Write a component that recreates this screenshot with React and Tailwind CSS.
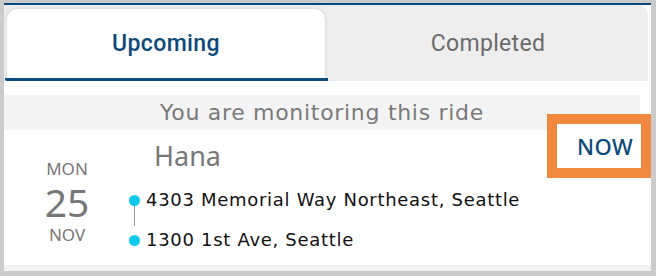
import React from "react";

const font = { fontFamily: "'Noto Sans', 'Liberation Sans', sans-serif" };
const wide = { fontFamily: "'DejaVu Sans', 'Noto Sans', sans-serif" };

const Stop = ({ text }) => (
  <div className="relative flex items-center h-[20px]">
    <span className="w-[11px] h-[11px] rounded-full bg-[#0ccaf0] shrink-0 ml-[-1px]" />
    <span className="ml-[6px] text-[18px] tracking-[0.7px] text-[#111] leading-none" style={wide}>{text}</span>
  </div>
);

const App = () => {
  return (
    <div className="w-[656px] h-[276px] bg-[#cbcbcb] pl-[4px] pt-[3px] pr-[5px] pb-[5px] font-['Roboto',sans-serif]">
      <div className="h-full flex flex-col bg-white border-t-2 border-[#0b4a7a]">
        {/* tabs */}
        <div className="flex h-[76px] shrink-0">
          <div className="w-[324px] bg-[#ececec] flex flex-col pl-[1px]">
            <div className="flex-1 mt-[4px] ml-[2px] mr-[3px] bg-white rounded-t-[10px] shadow-[0_0_3px_rgba(0,0,0,0.15)] flex items-center justify-center">
              <span className="text-[23px] tracking-[0.4px] font-medium text-[#0b4a7a] mt-[2px]">Upcoming</span>
            </div>
            <div className="h-[3px] bg-[#0b4a7a] rounded-bl-[2px]" />
          </div>
          <div className="flex-1 mr-[3px] bg-[#eeeeee] rounded-tr-[10px] flex items-center justify-center">
            <span className="text-[23px] tracking-[0.3px] text-[#6b6b6b] mt-[2px]">Completed</span>
          </div>
        </div>

        <div className="h-[14px] shrink-0" />

        {/* banner */}
        <div className="h-[35px] shrink-0 mr-[11px] bg-[#f4f4f4] flex items-center justify-center">
          <span className="text-[22px] tracking-[0.7px] text-[#7a7a7a] leading-none" style={wide}>You are monitoring this ride</span>
        </div>

        {/* card */}
        <div className="relative flex-1 flex" style={font}>
          <div className="w-[126px] shrink-0 flex flex-col items-center pt-[32px] text-[#777]">
            <span className="text-[17px] leading-[14px]">MON</span>
            <span className="text-[39px] leading-[32px] mt-[10px]">25</span>
            <span className="text-[17px] leading-[14px] mt-[10px]">NOV</span>
          </div>
          <div className="flex flex-col pt-[12px]">
            <span className="ml-[24px] text-[27px] leading-none text-[#777]">Hana</span>
            <div className="relative mt-[21px] flex flex-col gap-[20px]">
              <span className="absolute left-[4px] top-[14px] w-px h-[22px] bg-[#999]" />
              <Stop text="4303 Memorial Way Northeast, Seattle" />
              <Stop text="1300 1st Ave, Seattle" />
            </div>
          </div>
          <div className="absolute right-0 top-[-16px] w-[104px] h-[64px] border-[10px] border-[#f0883e] bg-white flex items-center justify-end pr-[8px]">
            <span className="text-[22px] tracking-[0.4px] font-medium text-[#0b4a7a] leading-none">NOW</span>
          </div>
        </div>

        <div className="h-[6px] shrink-0 bg-[#f2f2f2]" />
      </div>
    </div>
  );
};

export default App;
